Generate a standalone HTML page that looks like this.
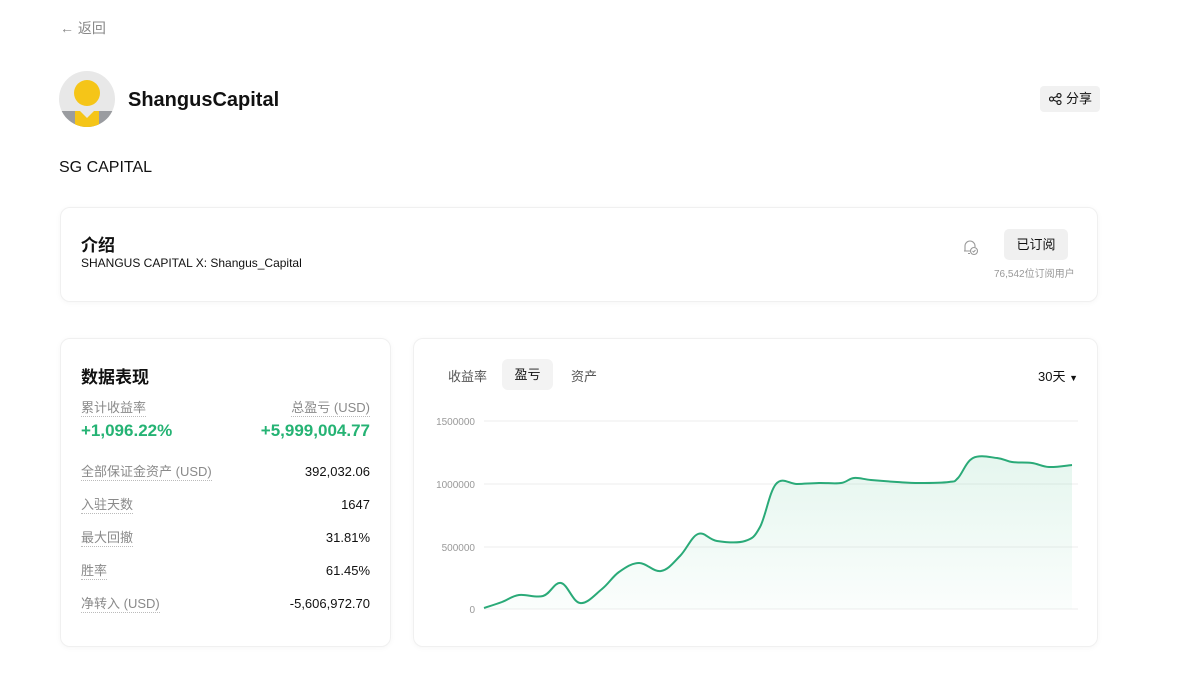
<!DOCTYPE html>
<html><head><meta charset="utf-8"><style>
*{margin:0;padding:0;box-sizing:border-box}
body{width:1200px;height:679px;background:#fff;font-family:"Liberation Sans","Noto Sans CJK SC",sans-serif;color:#111;position:relative;overflow:hidden}
.a{position:absolute}
.card{position:absolute;border:1px solid #f0f0f0;border-radius:10px;box-shadow:0 1px 6px rgba(0,0,0,0.04);background:#fff}
.lbl{color:#8a8a8a;font-size:13px;border-bottom:1px dotted #bbb;line-height:16px}
.val{font-size:13px;color:#111;text-align:right}
.row{position:absolute;left:20px;right:20px;height:18px}
.row .lbl{position:absolute;left:0;top:0}
.row .val{position:absolute;right:0;top:0}
</style></head><body>
<div class="a" style="left:60px;top:18px;font-size:14px;color:#888">&#8592; 返回</div>
<svg class="a" style="left:59px;top:71px" width="56" height="56" viewBox="0 0 56 56">
<defs><clipPath id="c"><circle cx="28" cy="28" r="28"/></clipPath></defs>
<g clip-path="url(#c)"><rect width="56" height="56" fill="#e8e8e8"/>
<rect x="0" y="40" width="56" height="16" fill="#9a9ca0"/>
<path d="M16 40 L40 40 L40 56 L16 56Z" fill="#f5c518"/>
<path d="M21 40 L28 47 L35 40Z" fill="#e8e8e8"/>
<circle cx="28" cy="22" r="13" fill="#f5c518"/></g></svg>
<div class="a" style="left:128px;top:89px;font-size:20px;font-weight:bold">ShangusCapital</div>
<div class="a" style="left:1040px;top:86px;width:60px;height:26px;background:#f1f1f1;border-radius:4px;font-size:13px;line-height:26px;padding-left:26px">分享</div>
<svg class="a" style="left:1049px;top:93px" width="13" height="12" viewBox="0 0 13 12"><circle cx="2.5" cy="6" r="2" fill="none" stroke="#222" stroke-width="1.2"/><circle cx="10" cy="2.5" r="2" fill="none" stroke="#222" stroke-width="1.2"/><circle cx="10" cy="9.5" r="2" fill="none" stroke="#222" stroke-width="1.2"/><path d="M4.3 5L8.2 3.3M4.3 7L8.2 8.7" stroke="#222" stroke-width="1.2"/></svg>
<div class="a" style="left:59px;top:159px;font-size:16px">SG CAPITAL</div>

<div class="card" style="left:60px;top:207px;width:1038px;height:95px">
<div class="a" style="left:20px;top:23px;font-size:17px;font-weight:bold">介绍</div>
<div class="a" style="left:20px;top:48px;font-size:12px">SHANGUS CAPITAL X: Shangus_Capital</div>
<svg class="a" style="left:901px;top:30px" width="17" height="18" viewBox="0 0 17 18"><path d="M3 13 L3 8 A5 5 0 0 1 13 8 L13 9 M2 13 L8 13 M6 15.5 L8 15.5" fill="none" stroke="#999" stroke-width="1.1"/><circle cx="12" cy="13" r="3.5" fill="none" stroke="#999" stroke-width="1.1"/><path d="M10.5 13 L11.6 14 L13.5 12" fill="none" stroke="#999" stroke-width="1"/></svg>
<div class="a" style="left:943px;top:21px;width:64px;height:31px;background:#f0f0f0;border-radius:5px;font-size:13px;text-align:center;line-height:31px">已订阅</div>
<div class="a" style="left:933px;top:57px;font-size:10px;color:#999">76,542位订阅用户</div>
</div>

<div class="card" style="left:60px;top:338px;width:331px;height:309px">
<div class="a" style="left:20px;top:24px;font-size:17px;font-weight:bold">数据表现</div>
<div class="a lbl" style="left:20px;top:61px">累计收益率</div>
<div class="a lbl" style="right:20px;top:61px">总盈亏 (USD)</div>
<div class="a" style="left:20px;top:82px;font-size:17px;font-weight:bold;color:#25b374">+1,096.22%</div>
<div class="a" style="right:20px;top:82px;font-size:17px;font-weight:bold;color:#25b374">+5,999,004.77</div>
<div class="row" style="top:125px"><span class="lbl">全部保证金资产 (USD)</span><span class="val">392,032.06</span></div>
<div class="row" style="top:158px"><span class="lbl">入驻天数</span><span class="val">1647</span></div>
<div class="row" style="top:191px"><span class="lbl">最大回撤</span><span class="val">31.81%</span></div>
<div class="row" style="top:224px"><span class="lbl">胜率</span><span class="val">61.45%</span></div>
<div class="row" style="top:257px"><span class="lbl">净转入 (USD)</span><span class="val">-5,606,972.70</span></div>
</div>

<div class="card" style="left:413px;top:338px;width:685px;height:309px"></div>
<div class="a" style="left:448px;top:366px;font-size:13px;color:#555">收益率</div>
<div class="a" style="left:502px;top:359px;width:51px;height:31px;background:#f3f3f3;border-radius:6px;font-size:13px;text-align:center;line-height:31px">盈亏</div>
<div class="a" style="left:571px;top:366px;font-size:13px;color:#555">资产</div>
<div class="a" style="left:1038px;top:366px;font-size:13px">30天 <span style="font-size:9px">&#9660;</span></div>
<svg class="a" style="left:0;top:0" width="1200" height="679">
<defs><linearGradient id="g" x1="0" y1="0" x2="0" y2="1"><stop offset="0" stop-color="#25b374" stop-opacity="0.12"/><stop offset="1" stop-color="#25b374" stop-opacity="0.02"/></linearGradient></defs>
<g stroke="#eee" stroke-width="1"><line x1="484" y1="421" x2="1078" y2="421"/><line x1="484" y1="484" x2="1078" y2="484"/><line x1="484" y1="547" x2="1078" y2="547"/><line x1="484" y1="609" x2="1078" y2="609"/></g>
<g font-size="10" fill="#999" text-anchor="end" font-family="Liberation Sans"><text x="475" y="425">1500000</text><text x="475" y="488">1000000</text><text x="475" y="551">500000</text><text x="475" y="613">0</text></g>
<path id="area" d="" fill="url(#g)"/>
<path id="line" d="" fill="none" stroke="#2aaa78" stroke-width="2" stroke-linejoin="round"/>
</svg>
<script>
var p=[[484,608],[502,602],[519,595],[543,596],[561,583],[580,603],[602,589],[619,572],[639,563],[661,571],[680,556],[698,534],[717,541],[745,541],[760,527],[776,484],[797,484],[819,483],[841,483],[854,478],[871,480],[897,482],[919,483],[949,482],[958,478],[973,458],[997,458],[1012,462],[1032,463],[1049,467],[1072,465]];
var d="M"+p[0][0]+" "+p[0][1];
for(var i=0;i<p.length-1;i++){var a=p[i-1]||p[i],b=p[i],c=p[i+1],e=p[i+2]||c;var t=0.18;
d+=" C"+(b[0]+(c[0]-a[0])*t)+" "+(b[1]+(c[1]-a[1])*t)+" "+(c[0]-(e[0]-b[0])*t)+" "+(c[1]-(e[1]-b[1])*t)+" "+c[0]+" "+c[1];}
document.getElementById("line").setAttribute("d",d);
document.getElementById("area").setAttribute("d",d+" L1072 609 L484 609Z");
</script>
</body></html>
